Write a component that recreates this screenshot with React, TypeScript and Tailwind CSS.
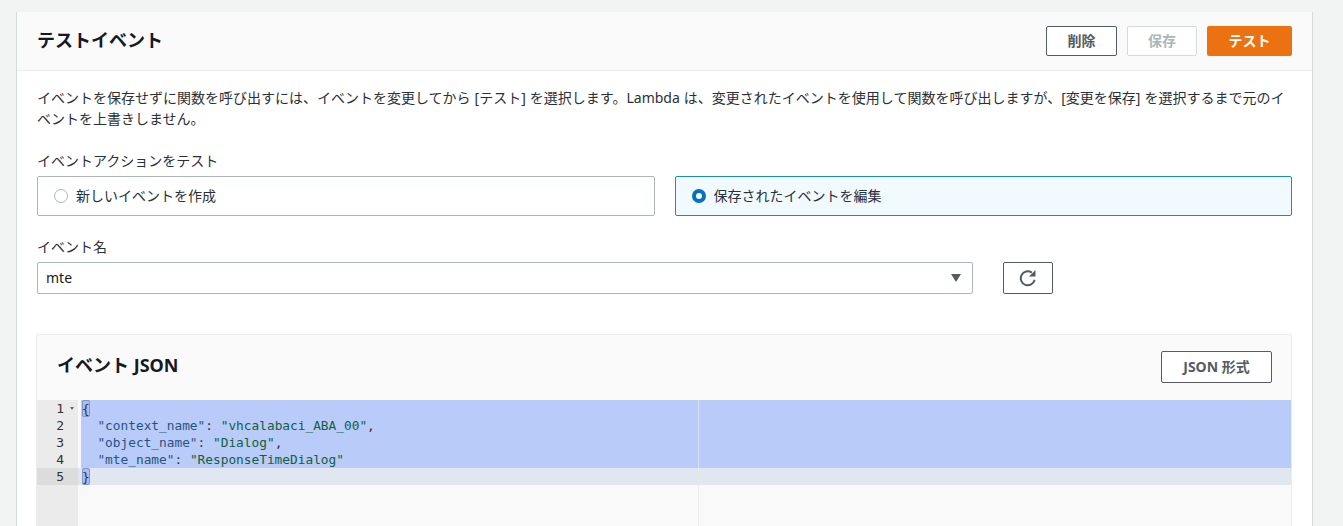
const codeLines = [
  [['{', 'bracket']],
  [
    ['  "context_name"', 'text-[#2a5384]'],
    [': ', 'text-[#333]'],
    ['"vhcalabaci_ABA_00"', 'text-[#11603f]'],
    [',', 'text-[#333]'],
  ],
  [
    ['  "object_name"', 'text-[#2a5384]'],
    [': ', 'text-[#333]'],
    ['"Dialog"', 'text-[#11603f]'],
    [',', 'text-[#333]'],
  ],
  [
    ['  "mte_name"', 'text-[#2a5384]'],
    [': ', 'text-[#333]'],
    ['"ResponseTimeDialog"', 'text-[#11603f]'],
  ],
  [['}', 'bracket']],
];

function RefreshIcon() {
  return (
    <svg width="20" height="20" viewBox="0 0 20 20" fill="none">
      <path d="M13.8 4.6A7 7 0 1 0 16.6 11.8" stroke="currentColor" strokeWidth="2" />
      <path d="M17.5 2V8.5H11Z" fill="currentColor" />
    </svg>
  );
}

export default function App() {
  return (
    <div className="h-[526px] overflow-hidden bg-[#f2f3f3] pt-3 pl-4 pr-[30px] font-['Noto_Sans','Noto_Sans_CJK_JP',sans-serif] text-[14px] text-[#16191f]">
      <div className="border-x border-[#d5dbdb] bg-white">
        <div className="flex h-[59px] items-center justify-between border-b border-[#eaeded] bg-[#fafafa] px-5">
          <h2 className="pb-0.5 text-[18px] font-bold">テストイベント</h2>
          <div className="flex gap-2.5">
            <button className="h-[30px] w-[71px] rounded-[2px] border border-[#545b64] bg-white pb-0.5 text-[14px] font-bold text-[#545b64]">
              削除
            </button>
            <button className="h-[30px] w-[70px] rounded-[2px] border border-[#d5dbdb] bg-white pb-0.5 text-[14px] font-bold text-[#aab7b8]">
              保存
            </button>
            <button className="h-[30px] w-[85px] rounded-[2px] bg-[#ec7211] pb-0.5 text-[14px] font-bold text-white">
              テスト
            </button>
          </div>
        </div>

        <div className="px-5 pt-4">
          <p className="text-[14px] leading-[21px] text-[#2b2f36] [word-spacing:0.4px]">
            イベントを保存せずに関数を呼び出すには、イベントを変更してから [テスト] を選択します。Lambda は、変更されたイベントを使用して関数を呼び出しますが、[変更を保存] を選択するまで元のイ
            <br />
            ベントを上書きしません。
          </p>

          <label className="mt-[21px] block text-[14px] leading-[22px] text-[#2b2f36]">イベントアクションをテスト</label>
          <div className="mt-1 grid grid-cols-2 gap-5">
            <div className="flex h-10 items-center gap-2 rounded-[2px] border border-[#aab7b8] bg-white pl-4">
              <span className="h-[14px] w-[14px] rounded-full border border-[#aab7b8]" />
              <span className="pb-0.5 text-[#2b2f36]">新しいイベントを作成</span>
            </div>
            <div className="flex h-10 items-center gap-2 rounded-[2px] border border-[#1a90a8] bg-[#f1faff] pl-4">
              <span className="flex h-[14px] w-[14px] items-center justify-center rounded-full bg-[#0073bb]">
                <span className="h-[6px] w-[6px] rounded-full bg-white" />
              </span>
              <span className="pb-0.5 text-[#2b2f36]">保存されたイベントを編集</span>
            </div>
          </div>

          <label className="mt-5 block text-[14px] leading-[22px] text-[#2b2f36]">イベント名</label>
          <div className="mt-1 flex items-center gap-[30px]">
            <div className="flex h-8 w-[936px] items-center justify-between rounded-[2px] border border-[#aab7b8] bg-white pb-0.5 pl-2 pr-[11px]">
              <span>mte</span>
              <span className="mt-0.5 h-0 w-0 border-x-[5px] border-t-[8px] border-x-transparent border-t-[#545b64]" />
            </div>
            <button className="flex h-8 w-[50px] items-center justify-center rounded-[2px] border border-[#545b64] bg-white text-[#545b64]">
              <RefreshIcon />
            </button>
          </div>

          <div className="-ml-px mt-10 rounded-t-[2px] border border-[#eaeded]">
            <div className="flex h-[65px] items-center justify-between bg-[#fafafa] pb-px pl-5 pr-[19px]">
              <h3 className="pb-[3px] text-[18px] font-bold">イベント JSON</h3>
              <button className="h-8 w-[111px] rounded-[2px] border border-[#545b64] bg-white pb-0.5 text-[14px] font-bold text-[#545b64]">
                JSON 形式
              </button>
            </div>

            <div className="relative flex h-[200px] bg-[#f9f9f9] font-['DejaVu_Sans_Mono',monospace] text-[12.8px] leading-[17px]">
              <div className="w-[41px] shrink-0 bg-[#ebebeb] text-[13px] text-[#333]">
                {[1, 2, 3, 4, 5].map((n) => (
                  <div key={n} className={`relative h-[17px] pr-[14px] text-right ${n === 5 ? 'bg-[#dcdcdc]' : ''}`}>
                    {n}
                    {n === 1 && (
                      <span className="absolute right-[4px] top-[7px] h-0 w-0 border-x-[2.5px] border-t-[3px] border-x-transparent border-t-[#666]" />
                    )}
                  </div>
                ))}
              </div>
              <div className="min-w-0 flex-1">
                {codeLines.map((parts, i) => (
                  <div key={i} className={`h-[17px] pl-[3px] ${i === 4 ? 'bg-[#e0e7f0]' : ''}`}>
                    <div className={`h-[17px] whitespace-pre pl-px ${i < 4 ? 'bg-[#b9cbf8]' : ''}`}>
                      {parts.map(([text, color], j) =>
                        color === 'bracket' ? (
                          <span
                            key={j}
                            className="inline-block h-[17px] rounded-[2px] bg-[#a9bdf0] text-[#333] outline outline-1 -outline-offset-1 outline-[#7f97c9]"
                          >
                            {text}
                          </span>
                        ) : (
                          <span key={j} className={color}>
                            {text}
                          </span>
                        ),
                      )}
                    </div>
                  </div>
                ))}
              </div>
              <div className="absolute bottom-0 left-[661px] top-0 w-px bg-[#e8e8e8]/70" />
            </div>
          </div>
        </div>
      </div>
    </div>
  );
}
